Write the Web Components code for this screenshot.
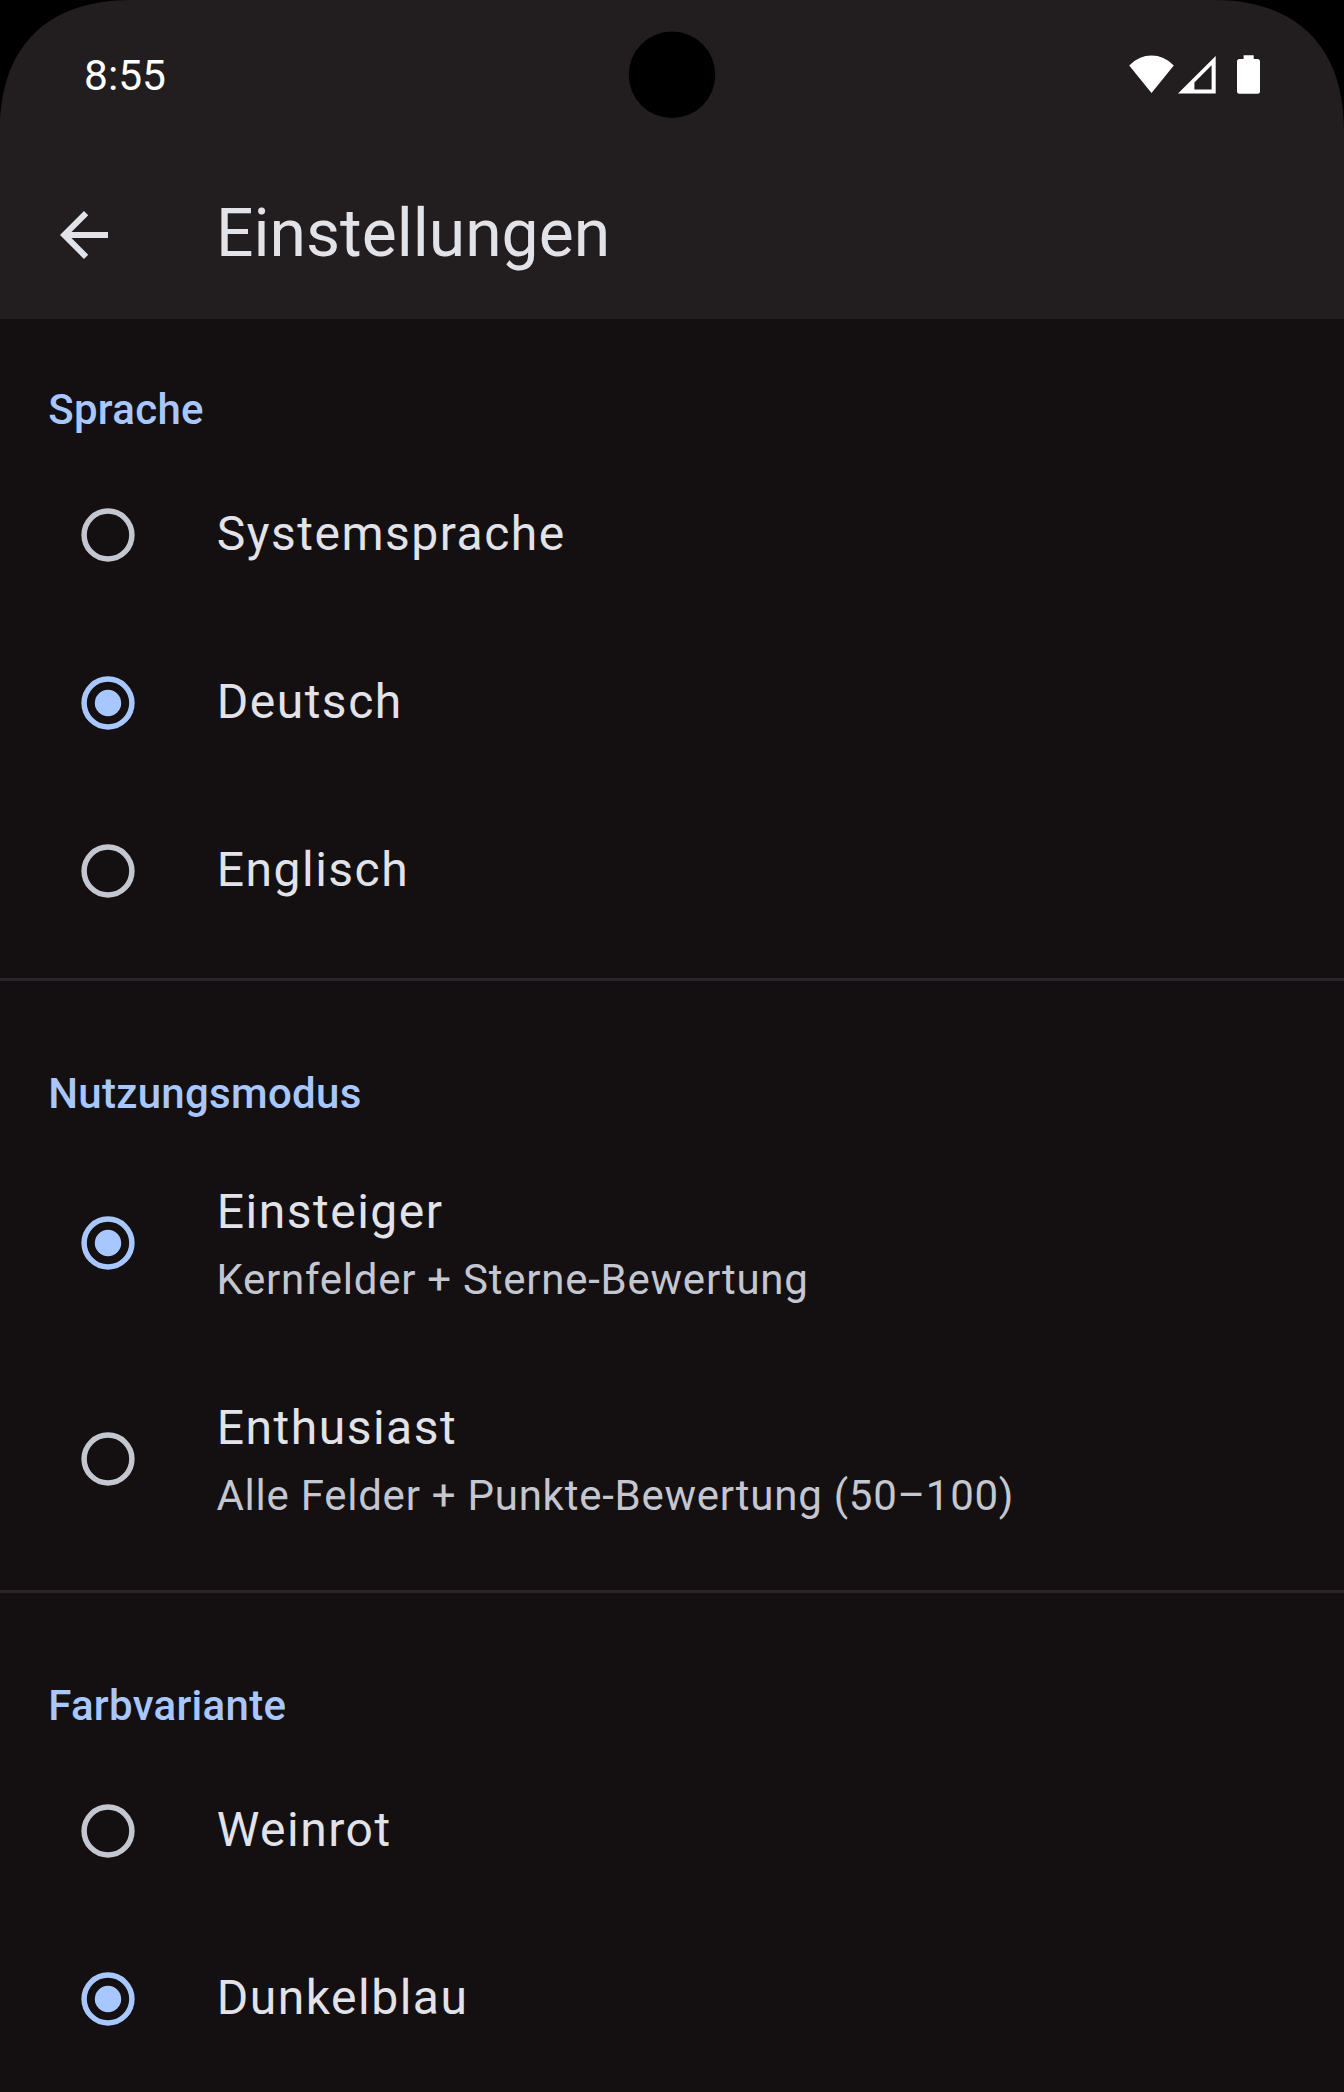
<!DOCTYPE html>
<html lang="de">
<head>
<meta charset="utf-8">
<title>Einstellungen</title>
<style>
html, body {
  margin: 0;
  height: 2092px;
  overflow: hidden;
  background: #141011;
}
</style>
</head>
<body>
<settings-screen>
  <status-bar slot="status" time="8:55"></status-bar>
  <app-bar slot="bar">Einstellungen</app-bar>

  <settings-section heading="Sprache">
    <radio-tile>Systemsprache</radio-tile>
    <radio-tile checked>Deutsch</radio-tile>
    <radio-tile>Englisch</radio-tile>
  </settings-section>
  <list-divider></list-divider>
  <settings-section heading="Nutzungsmodus">
    <radio-tile checked subtitle="Kernfelder + Sterne-Bewertung">Einsteiger</radio-tile>
    <radio-tile subtitle="Alle Felder + Punkte-Bewertung (50–100)">Enthusiast</radio-tile>
  </settings-section>
  <list-divider></list-divider>
  <settings-section heading="Farbvariante">
    <radio-tile>Weinrot</radio-tile>
    <radio-tile checked>Dunkelblau</radio-tile>
  </settings-section>
</settings-screen>

<script>
class SettingsScreen extends HTMLElement {
    connectedCallback() {
        this.attachShadow({mode: 'open'});
        this.shadowRoot.innerHTML = `
      <style>
:host {
  --surface: #141011;
  --surface-container: #221e1f;
  --on-surface: #e2e2e9;
  --on-surface-variant: #c4c6d0;
  --primary: #a8c7ff;
  --outline-variant: #27262b;

  display: flex;
  flex-direction: column;
  position: relative;
  height: 2092px;
  overflow: hidden;
  background: var(--surface);
  color: var(--on-surface);
  font-family: Roboto, sans-serif;
}

header {
  background: var(--surface-container);
}

main {
  display: flex;
  flex-direction: column;
}

/* Rounded display corners */
.corner {
  position: absolute;
  top: 0;
  left: 0;
}

.corner.right {
  left: auto;
  right: 0;
  transform: scaleX(-1);
}
      </style>

      <header>
        <slot name="status"></slot>
        <slot name="bar"></slot>
      </header>
      <main><slot></slot></main>

      <svg class="corner" width="130" height="130"><path d="M0 0V130C0 47 47 0 130 0Z"/></svg>
      <svg class="corner right" width="130" height="130"><path d="M0 0V130C0 47 47 0 130 0Z"/></svg>
    `;
    }
}

class StatusBar extends HTMLElement {
    connectedCallback() {
        this.attachShadow({mode: 'open'});
        this.shadowRoot.innerHTML = `
      <style>
:host {
  display: flex;
  align-items: center;
  justify-content: space-between;
  position: relative;
  box-sizing: border-box;
  height: 151px;
  padding: 0 83px 0 84px;
  color: #fff;
  font-size: 42.5px;
  line-height: 51px;
}

.icons {
  display: flex;
}

.camera {
  position: absolute;
  top: 30px;
  left: 627px;
}
      </style>

      <span class="time">${this.getAttribute('time')}</span>
      <svg class="camera" width="90" height="90"><circle cx="45" cy="44.8" r="43.3"/></svg>
      <svg class="icons" width="132" height="41" viewBox="1129 55 132 41" fill="#fff">
        <path d="M1129.2 65.5Q1139 55.6 1151.5 55.6T1173.8 65.5L1151.5 93Z"/>
        <path fill-rule="evenodd" d="M1178 93.4L1215.7 56V93.4ZM1194.4 89.6H1211.6V65.3L1194.4 82.5Z"/>
        <path d="M1243.6 55.2H1253.7V59H1257.5Q1260 59 1260 61.5V91.2Q1260 93.7 1257.5 93.7H1239.5Q1237 93.7 1237 91.2V61.5Q1237 59 1239.5 59H1243.6Z"/>
      </svg>
    `;
    }
}

class AppBar extends HTMLElement {
    connectedCallback() {
        this.attachShadow({mode: 'open'});
        this.shadowRoot.innerHTML = `
      <style>
:host {
  display: flex;
  align-items: center;
  gap: 96px;
  box-sizing: border-box;
  height: 168px;
  padding: 0 48px;
  font-size: 66px;
  line-height: 84px;
}

.title {
  margin-top: -3px;
}
      </style>

      <svg width="72" height="72" viewBox="0 0 24 24" fill="#e2e2e9">
        <path d="M20 11H7.83l5.59-5.59L12 4l-8 8 8 8 1.41-1.41L7.83 13H20v-2z"/>
      </svg>
      <span class="title"><slot></slot></span>
    `;
    }
}

class SettingsSection extends HTMLElement {
    connectedCallback() {
        this.attachShadow({mode: 'open'});
        this.shadowRoot.innerHTML = `
      <style>
:host {
  display: block;
}

h2 {
  margin: 0;
  padding: 61px 48px 11px 48.2px;
  color: var(--primary);
  font-size: 42px;
  font-weight: 500;
  line-height: 60px;
  letter-spacing: 0.3px;
}
      </style>

      <h2>${this.getAttribute('heading')}</h2>
      <slot></slot>
    `;
    }
}

class RadioTile extends HTMLElement {
    connectedCallback() {
        const subtitle = this.getAttribute('subtitle');
        const checked = this.hasAttribute('checked');

        this.attachShadow({mode: 'open'});
        this.shadowRoot.innerHTML = `
      <style>
:host {
  display: flex;
  align-items: center;
  gap: 72px;
  box-sizing: border-box;
  height: 168px;
  padding: 0 72px;
  color: var(--on-surface);
}

:host([subtitle]) {
  height: 216px;
}

svg {
  color: var(--on-surface-variant);
}

:host([checked]) svg {
  color: var(--primary);
}

.text {
  display: flex;
  flex-direction: column;
  gap: 2px;
  padding-bottom: 2px;
}

.title {
  padding-left: 0.75px;
  font-size: 48px;
  line-height: 72px;
  letter-spacing: 1.5px;
}

:host([subtitle]) .text {
  padding-bottom: 0;
}

.subtitle {
  padding-left: 0.4px;
  color: var(--on-surface-variant);
  font-size: 42px;
  line-height: 60px;
  letter-spacing: 0.75px;
}
      </style>

      <svg width="72" height="72" viewBox="0 0 72 72">
        <circle cx="36" cy="36" r="23.9" fill="none" stroke="currentColor" stroke-width="5.5"/>
        ${checked ? '<circle cx="36" cy="36" r="13.2" fill="currentColor"/>' : ''}
      </svg>
      <div class="text">
        <span class="title"><slot></slot></span>
        ${subtitle ? `<span class="subtitle">${subtitle}</span>` : ''}
      </div>
    `;
    }
}

class ListDivider extends HTMLElement {
    connectedCallback() {
        this.attachShadow({mode: 'open'});
        this.shadowRoot.innerHTML = `
      <style>
:host {
  display: block;
  padding: 23px 0 22px;
}

div {
  height: 3px;
  background: var(--outline-variant);
}
      </style>

      <div></div>
    `;
    }
}

customElements.define('settings-screen', SettingsScreen);
customElements.define('status-bar', StatusBar);
customElements.define('app-bar', AppBar);
customElements.define('settings-section', SettingsSection);
customElements.define('radio-tile', RadioTile);
customElements.define('list-divider', ListDivider);
</script>
</body>
</html>
